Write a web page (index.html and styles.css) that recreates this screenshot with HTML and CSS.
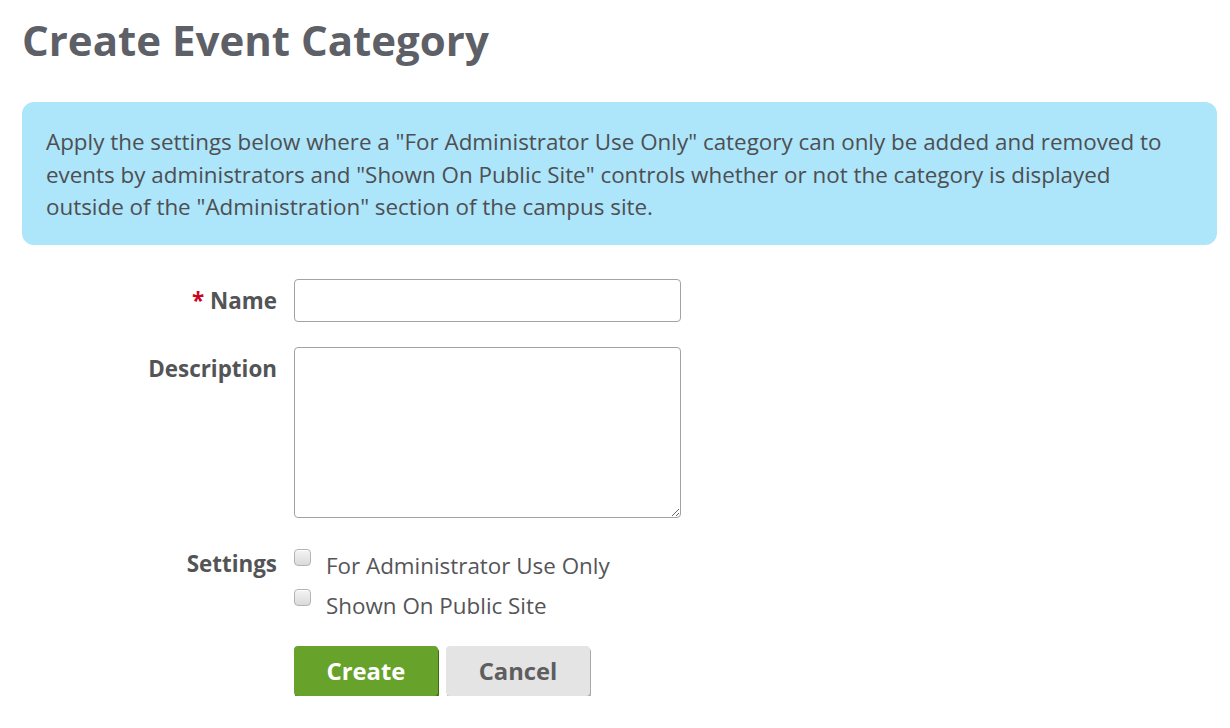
FILE: index.html
```html
<!DOCTYPE html>
<html lang="en">
<head>
<meta charset="utf-8">
<title>Create Event Category</title>
<link rel="stylesheet" href="styles.css">
</head>
<body>
<main class="page">
  <h1 class="title">Create Event Category</h1>
  <div class="info">Apply the settings below where a "For Administrator Use Only" category can only be added and removed to events by administrators and "Shown On Public Site" controls whether or not the category is displayed outside of the "Administration" section of the campus site.</div>
  <form class="form">
    <div class="row row-name">
      <label class="label" for="name"><span class="req">*</span> Name</label>
      <div class="field"><input class="input" id="name" type="text"></div>
    </div>
    <div class="row row-desc">
      <label class="label" for="desc">Description</label>
      <div class="field"><textarea class="textarea" id="desc"></textarea></div>
    </div>
    <div class="row row-settings">
      <div class="label label-settings">Settings</div>
      <div class="field options">
        <label class="option"><input class="check" type="checkbox"><span>For Administrator Use Only</span></label>
        <label class="option"><input class="check" type="checkbox"><span>Shown On Public Site</span></label>
      </div>
    </div>
    <div class="row row-actions">
      <div class="label"></div>
      <div class="field actions">
        <button type="button" class="btn btn-primary">Create</button>
        <button type="button" class="btn btn-secondary">Cancel</button>
      </div>
    </div>
  </form>
</main>
</body>
</html>
```

FILE: styles.css
```css
html, body {
  margin: 0;
  padding: 0;
  background: #ffffff;
}
body {
  font-family: "Open Sans", "Liberation Sans", sans-serif;
  color: #555558;
}
.page {
  padding: 10px 13px 0 22px;
}
.title {
  margin: 0;
  font-size: 42px;
  line-height: 60px;
  font-weight: 700;
  color: #5d6066;
}
.info {
  margin-top: 32px;
  background: #ade5fa;
  border-radius: 12px;
  padding: 24px 24px 21px 24px;
  font-size: 22.4px;
  line-height: 32.5px;
  color: #4d4f52;
}
.form {
  margin-top: 34px;
}
.row {
  display: grid;
  grid-template-columns: 255px 1fr;
  column-gap: 17px;
}
.row-name { margin-bottom: 25px; }
.row-desc { margin-bottom: 28px; }
.row-settings { margin-bottom: 20px; }
.label {
  text-align: right;
  font-weight: 700;
  font-size: 22.4px;
  line-height: 43px;
  color: #535456;
}
.label-settings {
  line-height: 36px;
}
.req {
  color: #d0021b;
}
.input, .textarea {
  display: block;
  box-sizing: border-box;
  width: 387px;
  border: 1.5px solid #a3a3a3;
  border-radius: 4px;
  background: #fff;
  font-family: inherit;
  font-size: 18px;
  margin: 0;
}
.input {
  height: 43px;
}
.textarea {
  height: 171px;
  resize: both;
}
.options {
  display: flex;
  flex-direction: column;
}
.option {
  display: flex;
  align-items: flex-start;
  gap: 15px;
  font-size: 22.4px;
  line-height: 40px;
  color: #555558;
}
.check {
  appearance: none;
  -webkit-appearance: none;
  margin: 3px 0 0 0;
  width: 17px;
  height: 17px;
  box-sizing: border-box;
  border: 1px solid #b3b3b3;
  border-radius: 4px;
  background: linear-gradient(#f4f4f4, #dadada);
  box-shadow: inset 0 1px 0 #ffffff;
}
.actions {
  display: flex;
  gap: 8px;
}
.btn {
  width: 144px;
  height: 50px;
  border: none;
  border-radius: 4px;
  font-family: inherit;
  font-weight: 700;
  font-size: 23.8px;
  cursor: pointer;
  padding: 0;
}
.btn-primary {
  background: #67a32b;
  color: #ffffff;
  box-shadow: 1px 2px 0 #3f6b16;
}
.btn-secondary {
  background: #e4e4e4;
  color: #5e5e60;
  box-shadow: 1px 2px 0 #a9a9a9;
}
```
